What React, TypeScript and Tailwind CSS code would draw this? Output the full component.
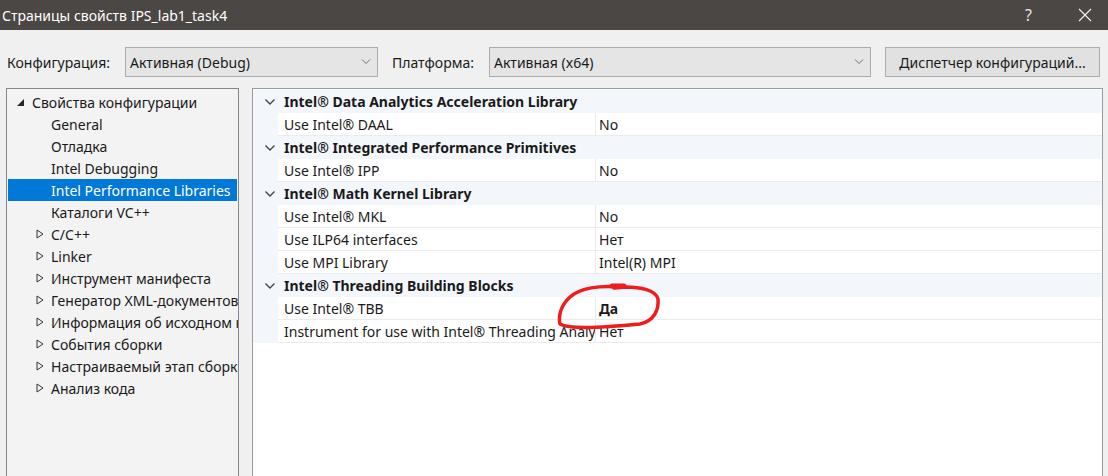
import React from "react";

const font = { fontFamily: '"Noto Sans", "Open Sans", sans-serif' };

function Chevron() {
  return (
    <svg width="12" height="8" viewBox="0 0 12 8" className="shrink-0">
      <path d="M1.5 1.5 L6 6 L10.5 1.5" fill="none" stroke="#444" strokeWidth="1.4" />
    </svg>
  );
}

function Expander({ open }: { open?: boolean }) {
  if (open) {
    return (
      <svg width="9" height="9" viewBox="0 0 9 9">
        <path d="M8 1 L8 8 L1 8 Z" fill="#262626" />
      </svg>
    );
  }
  return (
    <svg width="8" height="10" viewBox="0 0 8 10">
      <path d="M1 1 L7 5 L1 9 Z" fill="none" stroke="#333" strokeWidth="1" />
    </svg>
  );
}

function Select({ value, className }: { value: string; className: string }) {
  return (
    <div className={`h-[30px] bg-[#e5e5e5] border border-[#acacac] flex items-center justify-between pl-[4px] pr-[6px] ${className}`}>
      <span>{value}</span>
      <svg width="10" height="6" viewBox="0 0 10 6">
        <path d="M1 0.5 L5 4.5 L9 0.5" fill="none" stroke="#6d6d6d" strokeWidth="1" />
      </svg>
    </div>
  );
}

const tree: { label: string; expander?: boolean; selected?: boolean }[] = [
  { label: "General" },
  { label: "Отладка" },
  { label: "Intel Debugging" },
  { label: "Intel Performance Libraries", selected: true },
  { label: "Каталоги VC++" },
  { label: "C/C++", expander: true },
  { label: "Linker", expander: true },
  { label: "Инструмент манифеста", expander: true },
  { label: "Генератор XML-документов", expander: true },
  { label: "Информация об исходном коде", expander: true },
  { label: "События сборки", expander: true },
  { label: "Настраиваемый этап сборки", expander: true },
  { label: "Анализ кода", expander: true },
];

type Row = { header: string } | { name: string; value: string; bold?: boolean };

const rows: Row[] = [
  { header: "Intel® Data Analytics Acceleration Library" },
  { name: "Use Intel® DAAL", value: "No" },
  { header: "Intel® Integrated Performance Primitives" },
  { name: "Use Intel® IPP", value: "No" },
  { header: "Intel® Math Kernel Library" },
  { name: "Use Intel® MKL", value: "No" },
  { name: "Use ILP64 interfaces", value: "Нет" },
  { name: "Use MPI Library", value: "Intel(R) MPI" },
  { header: "Intel® Threading Building Blocks" },
  { name: "Use Intel® TBB", value: "Да", bold: true },
  { name: "Instrument for use with Intel® Threading Analysis Tools", value: "Нет" },
];

export default function App() {
  return (
    <div className="relative w-[1108px] h-[476px] overflow-hidden bg-[#f0f0f0] text-[14px] text-[#1a1a1a]" style={font}>
      {/* Title bar */}
      <div className="h-[30px] bg-[#4a4745] text-white flex items-center">
        <span className="pl-[2px] text-[14px]">Страницы свойств IPS_lab1_task4</span>
        <span className="ml-auto mr-[46px] text-[16px] text-[#e6e6e6]">?</span>
        <svg width="14" height="14" viewBox="0 0 14 14" className="mr-[16px]">
          <path d="M1 1 L13 13 M13 1 L1 13" stroke="#f0f0f0" strokeWidth="1.2" />
        </svg>
      </div>

      {/* Config row */}
      <div className="flex items-center h-[30px] mt-[17px]">
        <span className="pl-[7px] w-[125px]">Конфигурация:</span>
        <Select value="Активная (Debug)" className="w-[253px]" />
        <span className="pl-[14px] w-[111px]">Платформа:</span>
        <Select value="Активная (x64)" className="w-[382px]" />
        <div className="ml-[14px] w-[215px] h-[30px] bg-[#e1e1e1] border border-[#adadad] flex items-center justify-center">
          Диспетчер конфигураций...
        </div>
      </div>

      {/* Panels */}
      <div className="flex mt-[11px] h-[420px]">
        <div className="ml-[6px] w-[233px] bg-[#f3f3f3] border border-[#828790] pt-[2px] overflow-hidden">
          <div className="h-[22px] flex items-center pl-[9px] whitespace-nowrap">
            <span className="w-[16px] flex"><Expander open /></span>
            <span>Свойства конфигурации</span>
          </div>
          {tree.map((t) => (
            <div
              key={t.label}
              className={`h-[22px] flex items-center whitespace-nowrap ml-[1px] mr-[1px] ${t.selected ? "bg-[#0078d7] text-white" : ""}`}
            >
              <span className="w-[43px] shrink-0 flex pl-[28px]">{t.expander && <Expander />}</span>
              <span>{t.label}</span>
            </div>
          ))}
        </div>

        <div className="ml-[13px] w-[851px] bg-white border border-[#9a9a9a] pt-[1px] overflow-hidden">
          {rows.map((r, i) =>
            "header" in r ? (
              <div key={i} className="h-[23px] bg-[#f3f6fb] flex items-center">
                <span className="w-[31px] flex justify-center pl-[2px]"><Chevron /></span>
                <span className="font-bold">{r.header}</span>
              </div>
            ) : (
              <div key={i} className="h-[23px] flex bg-[#f3f6fb]">
                <div className="w-[25px] shrink-0" />
                <div className="w-[317px] shrink-0 bg-white border-b border-[#ebebeb] flex items-center pl-[6px] whitespace-nowrap overflow-hidden">
                  {r.name}
                </div>
                <div className={`flex-1 bg-white border-b border-l border-[#ebebeb] flex items-center pl-[3px] ${r.bold ? "font-bold" : ""}`}>
                  {r.value}
                </div>
              </div>
            )
          )}
        </div>
      </div>

      {/* hand-drawn red mark */}
      <svg className="absolute left-0 top-0 pointer-events-none" width="1108" height="476">
        <path
          d="M620 287 C600 285 580 288 570 297 C561 305 558 316 560 324 C570 330 610 327 640 324 C654 321 659 310 658 299 C656 290 640 287 626 287 L614 288"
          fill="none"
          stroke="#ee1c1c"
          strokeWidth="3.5"
          strokeLinecap="round"
          strokeLinejoin="round"
        />
        <path d="M612 286 L624 286" stroke="#ee1c1c" strokeWidth="5" strokeLinecap="round" />
      </svg>
    </div>
  );
}
